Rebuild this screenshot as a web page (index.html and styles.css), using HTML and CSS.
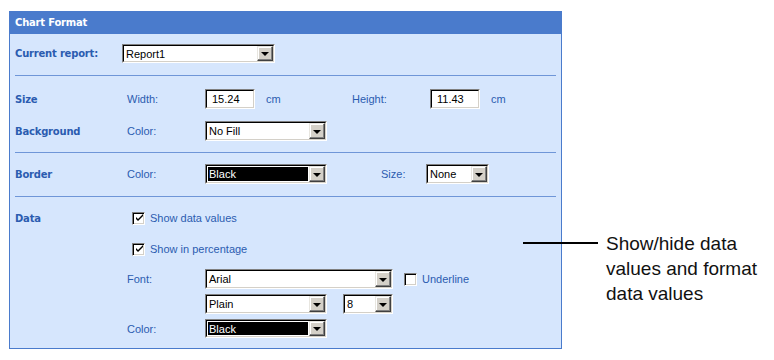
FILE: index.html
```html
<!DOCTYPE html>
<html lang="en">
<head>
    <meta charset="UTF-8">
    <title>Chart Format</title>
    <link rel="stylesheet" href="styles.css">
</head>
<body>
    <div class="page">
        <div class="panel">
            <div class="panel-head">Chart Format</div>
            <div class="panel-body">
                <div class="row row-report">
                    <span class="section wide">Current report:</span>
                    <div class="select w153"><div class="sel-in"><span class="sel-val">Report1</span><span class="sel-btn"><i></i></span></div></div>
                </div>
                <div class="sep"></div>

                <div class="row row-size">
                    <span class="section">Size</span>
                    <span class="label">Width:</span>
                    <div class="textbox"><div class="tb-in">15.24</div></div>
                    <span class="unit">cm</span>
                    <span class="label label-height">Height:</span>
                    <div class="textbox"><div class="tb-in">11.43</div></div>
                    <span class="unit">cm</span>
                </div>
                <div class="row row-bg">
                    <span class="section">Background</span>
                    <span class="label">Color:</span>
                    <div class="select w122"><div class="sel-in"><span class="sel-val">No Fill</span><span class="sel-btn"><i></i></span></div></div>
                </div>
                <div class="sep"></div>

                <div class="row row-border">
                    <span class="section">Border</span>
                    <span class="label">Color:</span>
                    <div class="select w122"><div class="sel-in"><span class="sel-val black">Black</span><span class="sel-btn"><i></i></span></div></div>
                    <span class="label label-bsize">Size:</span>
                    <div class="select w63"><div class="sel-in"><span class="sel-val">None</span><span class="sel-btn"><i></i></span></div></div>
                </div>
                <div class="sep"></div>

                <div class="row row-data1">
                    <span class="section section-data">Data</span>
                    <span class="check on"><svg width="9" height="9" viewBox="0 0 9 9"><path d="M1 3 L3 5 L8 0 V2 L3 7 L1 5 Z" fill="#000"/></svg></span>
                    <span class="check-text">Show data values</span>
                </div>
                <div class="row row-data2">
                    <span class="section section-data"></span>
                    <span class="check on"><svg width="9" height="9" viewBox="0 0 9 9"><path d="M1 3 L3 5 L8 0 V2 L3 7 L1 5 Z" fill="#000"/></svg></span>
                    <span class="check-text">Show in percentage</span>
                </div>
                <div class="row row-font">
                    <span class="section"></span>
                    <span class="label">Font:</span>
                    <div class="select w188"><div class="sel-in"><span class="sel-val">Arial</span><span class="sel-btn"><i></i></span></div></div>
                    <span class="check check-ul"></span>
                    <span class="check-text">Underline</span>
                </div>
                <div class="row row-style">
                    <span class="section"></span>
                    <span class="label"></span>
                    <div class="select w122"><div class="sel-in"><span class="sel-val">Plain</span><span class="sel-btn"><i></i></span></div></div>
                    <div class="select w50 fsize"><div class="sel-in"><span class="sel-val">8</span><span class="sel-btn"><i></i></span></div></div>
                </div>
                <div class="row row-color">
                    <span class="section"></span>
                    <span class="label">Color:</span>
                    <div class="select w122"><div class="sel-in"><span class="sel-val black">Black</span><span class="sel-btn"><i></i></span></div></div>
                </div>
            </div>
        </div>

        <div class="callout">
            <span class="callout-line"></span>
            <p class="callout-text">Show/hide data<br>values and format<br>data values</p>
        </div>
    </div>
</body>
</html>
```

FILE: styles.css
```css
body {
    margin: 0;
    background: #fff;
    font-family: "Liberation Sans", Arial, sans-serif;
    font-size: 11px;
}
.page {
    display: flex;
    padding: 11px 0 0 9px;
}
.panel {
    width: 553px;
    height: 338px;
    box-sizing: border-box;
    border: 1px solid #4a7bcc;
    background: #d6e6fd;
}
.panel-head {
    height: 22px;
    background: #4a7bcc;
    color: #fff;
    font-family: "DejaVu Sans", Verdana, sans-serif;
    font-weight: bold;
    font-size: 10px;
    line-height: 21px;
    padding-left: 5px;
    letter-spacing: -0.2px;
}
.panel-body {
    padding: 10px 5px 0 5px;
}
.row {
    display: flex;
    align-items: center;
    height: 19px;
}
.section {
    width: 112px;
    flex: none;
    font-family: "DejaVu Sans", Verdana, sans-serif;
    font-weight: bold;
    font-size: 10px;
    color: #2b5cb0;
    letter-spacing: -0.2px;
}
.section.wide {
    width: 107px;
}
.label {
    width: 78px;
    flex: none;
    color: #2b5cb0;
}
.unit {
    flex: none;
    color: #2b5cb0;
    margin-left: 11px;
    width: 86px;
}
.unit:last-child {
    width: auto;
}
.label-height {
    width: 78px;
}
.label-bsize {
    margin-left: 54px;
    width: 45px;
}
.sep {
    height: 1px;
    background: #6f96d8;
}
.row-report + .sep { margin-top: 12px; }
.row-size { margin-top: 13px; height: 20px; }
.row-bg { margin-top: 12px; height: 20px; }
.row-bg + .sep { margin-top: 11px; }
.row-border { margin-top: 11px; height: 20px; }
.row-border + .sep { margin-top: 12px; }
.row-data1 { margin-top: 11px; height: 20px; }
.row-data2 { margin-top: 11px; height: 20px; }
.row-font { margin-top: 10px; height: 20px; }
.row-style { margin-top: 5px; height: 20px; }
.row-color { margin-top: 5px; height: 19px; }

.select, .textbox {
    flex: none;
    box-sizing: border-box;
    height: 20px;
    border: 1px solid;
    border-color: #808080 #fff #fff #808080;
    background: #fff;
}
.row-report .select, .row-color .select { height: 19px; }
.sel-in, .tb-in {
    height: 100%;
    box-sizing: border-box;
    border: 1px solid;
    border-color: #000 #d4d0c8 #d4d0c8 #000;
    display: flex;
}
.sel-val {
    flex: 1;
    color: #000;
    line-height: 16px;
    padding-left: 2px;
    white-space: nowrap;
    overflow: hidden;
}
.sel-val.black {
    background: #000;
    color: #fff;
    margin: 1px;
    line-height: 14px;
    padding-left: 1px;
}
.sel-btn {
    width: 16px;
    flex: none;
    box-sizing: border-box;
    background: #d4d0c8;
    border: 1px solid;
    border-color: #e8e6e0 #404040 #404040 #e8e6e0;
    box-shadow: inset -1px -1px 0 #808080, inset 1px 1px 0 #fff;
    display: flex;
    align-items: center;
    justify-content: center;
}
.sel-btn i {
    width: 0;
    height: 0;
    border-left: 4px solid transparent;
    border-right: 4px solid transparent;
    border-top: 4px solid #000;
    margin-top: 1px;
}
.w153 { width: 153px; }
.w122 { width: 122px; }
.w188 { width: 188px; }
.w63 { width: 63px; }
.w50 { width: 50px; }
.fsize { margin-left: 16px; }
.textbox { width: 50px; }
.tb-in {
    line-height: 17px;
    padding-left: 5px;
    color: #000;
}

.check {
    flex: none;
    width: 13px;
    height: 13px;
    box-sizing: border-box;
    border: 1px solid;
    border-color: #808080 #fff #fff #808080;
    box-shadow: inset 1px 1px 0 #000, inset -1px -1px 0 #d4d0c8;
    background: #fff;
    margin-left: 5px;
    display: flex;
    align-items: center;
    justify-content: center;
}
.check svg {
    margin: 1px 0 0 1px;
}
.check-text {
    color: #2b5cb0;
    margin-left: 5px;
}
.check-ul {
    margin-left: 11px;
}

.callout {
    display: flex;
    align-items: flex-start;
    margin-top: 220px;
    height: 80px;
}
.callout-line {
    width: 75px;
    height: 2px;
    background: #000;
    margin: 11px 0 0 -39px;
    flex: none;
}
.callout-text {
    margin: 0 0 0 8px;
    font-family: "Liberation Sans", Arial, sans-serif;
    font-size: 19px;
    line-height: 25px;
    color: #111;
}
```
